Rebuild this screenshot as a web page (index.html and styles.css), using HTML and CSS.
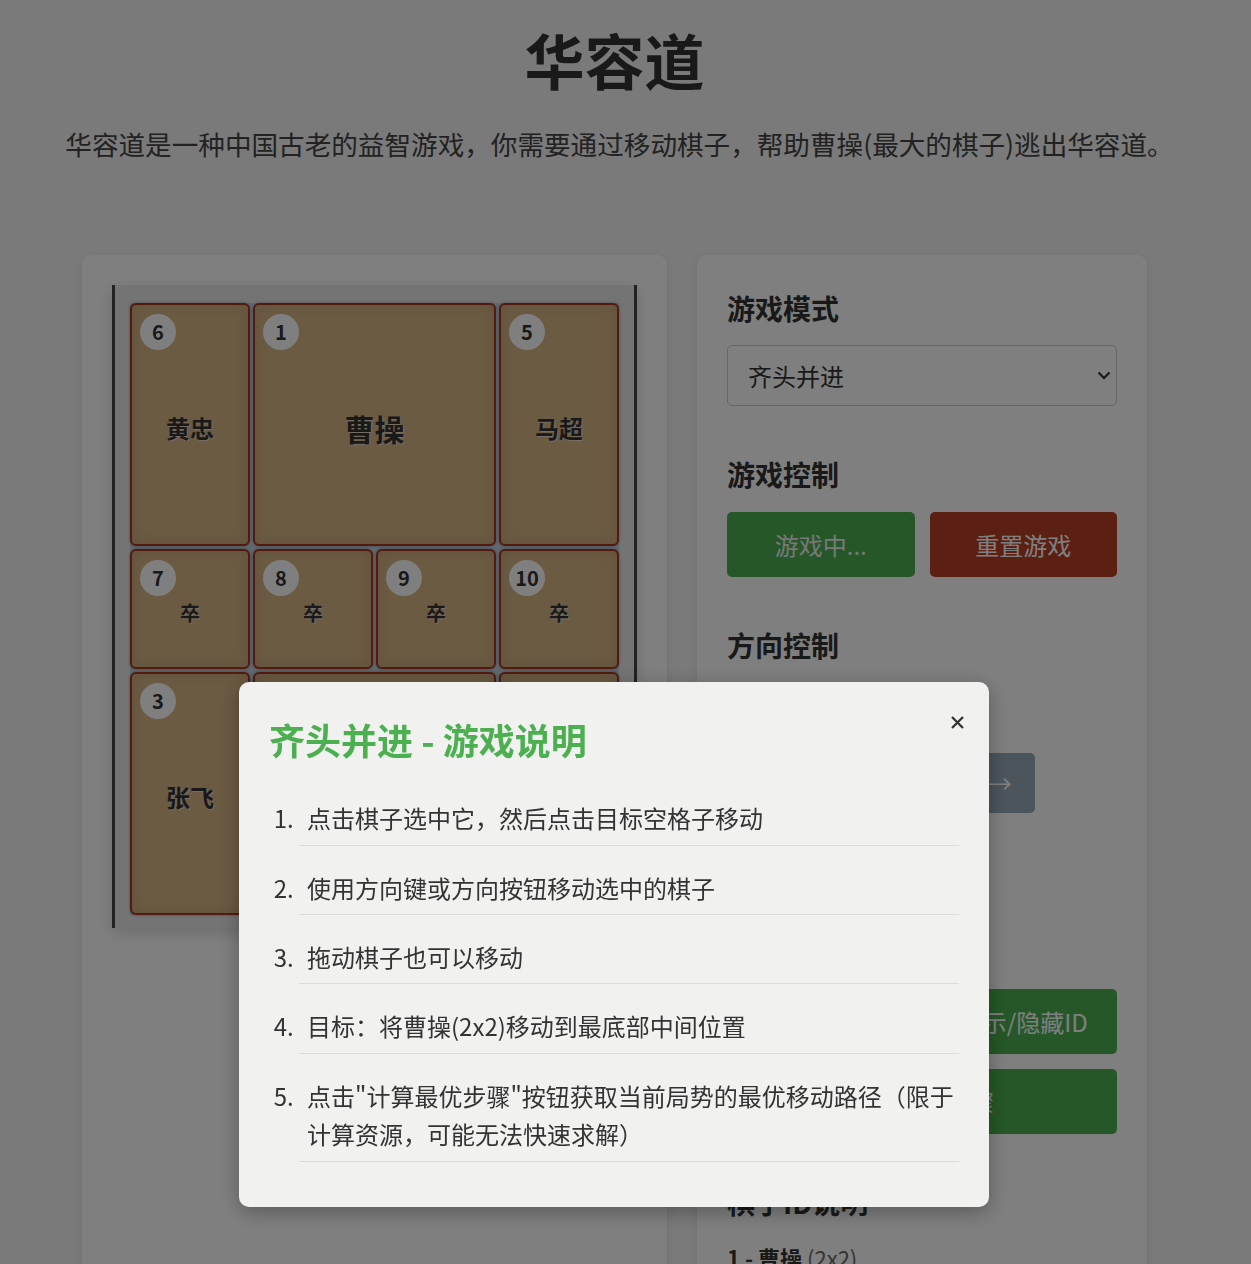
FILE: index.html
```html
<!DOCTYPE html>
<html lang="zh-CN">
<head>
<meta charset="utf-8">
<title>华容道</title>
<link rel="stylesheet" href="styles.css">
</head>
<body>
<div class="wrapper">
  <header class="header">
    <h1 class="title">华容道</h1>
    <p class="intro">华容道是一种中国古老的益智游戏，你需要通过移动棋子，帮助曹操(最大的棋子)逃出华容道。</p>
  </header>

  <main class="container">
    <section class="card game-card">
      <div class="board">
        <div class="grid">
          <div class="piece p-huang"><span class="badge">6</span><span class="label">黄忠</span></div>
          <div class="piece p-cao"><span class="badge">1</span><span class="label label-big">曹操</span></div>
          <div class="piece p-ma"><span class="badge">5</span><span class="label">马超</span></div>
          <div class="piece p-s7"><span class="badge">7</span><span class="label label-small">卒</span></div>
          <div class="piece p-s8"><span class="badge">8</span><span class="label label-small">卒</span></div>
          <div class="piece p-s9"><span class="badge">9</span><span class="label label-small">卒</span></div>
          <div class="piece p-s10"><span class="badge">10</span><span class="label label-small">卒</span></div>
          <div class="piece p-zhang"><span class="badge">3</span><span class="label">张飞</span></div>
          <div class="piece p-guan"><span class="badge">2</span><span class="label">关羽</span></div>
          <div class="piece p-zhao"><span class="badge">4</span><span class="label">赵云</span></div>
        </div>
      </div>
      <div class="exit">▼</div>
      <div class="timer">时间: 00:02</div>
      <div class="moves">移动步数: 0</div>
    </section>

    <aside class="card panel">
      <div class="section">
        <h3 class="section-title">游戏模式</h3>
        <div class="select-wrap">
          <select class="select">
            <option>齐头并进</option>
            <option>横刀立马</option>
            <option>指挥若定</option>
          </select>
          <svg class="chevron" width="14" height="9" viewBox="0 0 14 9"><path d="M1.5 1.5L7 7L12.5 1.5" stroke="#333" stroke-width="2.2" fill="none"/></svg>
        </div>
      </div>

      <div class="section">
        <h3 class="section-title">游戏控制</h3>
        <div class="btn-row">
          <button class="btn btn-green btn-muted">游戏中...</button>
          <button class="btn btn-red">重置游戏</button>
        </div>
      </div>

      <div class="section">
        <h3 class="section-title">方向控制</h3>
        <div class="dpad">
          <button class="dir dir-up">↑</button>
          <button class="dir dir-left">←</button>
          <button class="dir dir-right">→</button>
          <button class="dir dir-down">↓</button>
        </div>
      </div>

      <div class="section">
        <h3 class="section-title">游戏选项</h3>
        <div class="btn-row">
          <button class="btn btn-green">游戏说明</button>
          <button class="btn btn-green">显示/隐藏ID</button>
          <button class="btn btn-green btn-wide">计算最优步骤</button>
        </div>
      </div>

      <div class="section">
        <h3 class="section-title">棋子ID说明</h3>
        <ul class="legend">
          <li><strong>1 - 曹操</strong> <span class="size">(2x2)</span></li>
          <li><strong>2 - 关羽</strong> <span class="size">(2x1)</span></li>
          <li><strong>3 - 张飞</strong> <span class="size">(1x2)</span></li>
          <li><strong>4 - 赵云</strong> <span class="size">(1x2)</span></li>
          <li><strong>5 - 马超</strong> <span class="size">(1x2)</span></li>
          <li><strong>6 - 黄忠</strong> <span class="size">(1x2)</span></li>
          <li><strong>7-10 - 卒</strong> <span class="size">(1x1)</span></li>
        </ul>
      </div>
    </aside>
  </main>
</div>

<div class="overlay">
  <div class="modal">
    <button class="close" aria-label="关闭">
      <svg width="13" height="13" viewBox="0 0 13 13"><path d="M1 1L12 12M12 1L1 12" stroke="#333" stroke-width="2.3" fill="none"/></svg>
    </button>
    <h2 class="modal-title">齐头并进 - 游戏说明</h2>
    <ol class="steps">
      <li>点击棋子选中它，然后点击目标空格子移动</li>
      <li>使用方向键或方向按钮移动选中的棋子</li>
      <li>拖动棋子也可以移动</li>
      <li>目标：将曹操(2x2)移动到最底部中间位置</li>
      <li>点击"计算最优步骤"按钮获取当前局势的最优移动路径（限于计算资源，可能无法快速求解）</li>
    </ol>
  </div>
</div>
</body>
</html>
```

FILE: styles.css
```css
* {
  box-sizing: border-box;
}

html {
  overflow: hidden;
}

html,
body {
  margin: 0;
  padding: 0;
}

body {
  background: #f5f5f5;
  color: #333;
  font-family: "Noto Sans CJK SC", "Noto Sans", sans-serif;
  line-height: 1.6;
}

.wrapper {
  width: 1229px;
}

/* Header */
.header {
  text-align: center;
}

.title {
  margin: 23px 0 0;
  font-size: 60px;
  line-height: 1.2;
  font-weight: 700;
  color: #333;
}

.intro {
  margin: 28px 0 0;
  padding-left: 10px;
  font-size: 26.6px;
  line-height: 1.6;
  color: #444;
}

/* Layout */
.container {
  width: 1065px;
  margin: 89px auto 0;
  display: flex;
  gap: 30px;
  align-items: stretch;
}

.card {
  background: #fff;
  border-radius: 10px;
  box-shadow: 0 2px 12px rgba(0, 0, 0, 0.08);
  padding: 30px;
}

.game-card {
  width: 585px;
  flex: none;
  display: flex;
  flex-direction: column;
  align-items: center;
}

/* Board */
.board {
  width: 525px;
  background: #e8e8e8;
  border-left: 3px solid #444;
  border-right: 3px solid #444;
  padding: 18px 15px 13px;
  box-shadow: 0 5px 15px rgba(0, 0, 0, 0.15);
}

.grid {
  display: grid;
  grid-template-columns: repeat(4, 120px);
  grid-template-rows: repeat(5, 120px);
  gap: 3px;
  background: #c2d1e0;
}

.piece {
  position: relative;
  display: flex;
  align-items: center;
  justify-content: center;
  padding-top: 8px;
  background: #d8b686;
  border: 2px solid #a8341c;
  border-radius: 6px;
  box-shadow: 0 0 3px rgba(0, 0, 0, 0.35), inset 0 0 14px rgba(0, 0, 0, 0.1);
  color: #333;
  font-weight: 700;
  font-size: 24px;
  text-shadow: 1px 1px 1px rgba(255, 255, 255, 0.55);
}

.label-big {
  font-size: 30px;
}

.label-small {
  font-size: 20px;
}

.badge {
  position: absolute;
  top: 9px;
  left: 8px;
  width: 36px;
  height: 36px;
  border-radius: 50%;
  background: #fff;
  display: flex;
  align-items: center;
  justify-content: center;
  font-size: 20px;
  line-height: 1;
  font-weight: 700;
  text-shadow: none;
}

.p-huang { grid-column: 1; grid-row: 1 / span 2; }
.p-cao { grid-column: 2 / span 2; grid-row: 1 / span 2; }
.p-ma { grid-column: 4; grid-row: 1 / span 2; }
.p-s7 { grid-column: 1; grid-row: 3; }
.p-s8 { grid-column: 2; grid-row: 3; }
.p-s9 { grid-column: 3; grid-row: 3; }
.p-s10 { grid-column: 4; grid-row: 3; }
.p-zhang { grid-column: 1; grid-row: 4 / span 2; }
.p-guan { grid-column: 2 / span 2; grid-row: 4; }
.p-zhao { grid-column: 4; grid-row: 4 / span 2; }

.exit {
  margin-top: -2px;
  font-size: 14px;
  line-height: 1;
  color: #999;
}

.timer {
  margin-top: 44px;
  font-size: 24px;
  color: #333;
}

.moves {
  margin-top: 30px;
  font-size: 20px;
  color: #333;
}

/* Panel */
.panel {
  width: 450px;
  flex: none;
  padding-top: 31px;
  display: flex;
  flex-direction: column;
  gap: 46px;
}

.section-title {
  margin: 0 0 15px;
  font-size: 28px;
  line-height: 1.6;
  font-weight: 700;
  color: #333;
}

.select-wrap {
  position: relative;
}

.select {
  display: block;
  width: 100%;
  height: 61px;
  padding: 0 40px 0 20px;
  border: 1px solid #ccc;
  border-radius: 5px;
  background-color: #fff;
  color: #333;
  font-family: inherit;
  font-size: 24px;
  appearance: none;
  -webkit-appearance: none;
}

.chevron {
  position: absolute;
  right: 6px;
  top: 26px;
  pointer-events: none;
}

.btn-row {
  display: grid;
  grid-template-columns: 1fr 1fr;
  gap: 15px;
}

.btn {
  height: 65px;
  border: none;
  border-radius: 5px;
  color: #fff;
  font-family: inherit;
  font-size: 24px;
  padding: 0;
}

.btn-green {
  background: #4caf50;
}

.btn-muted {
  color: #f0f0f0;
}

.btn-red {
  background: #b64024;
}

.btn-wide {
  grid-column: 1 / -1;
}

.dpad {
  display: grid;
  grid-template-columns: repeat(3, 70px);
  grid-template-rows: repeat(3, 60px);
  gap: 10px 8px;
  justify-content: center;
}

.dir {
  border: none;
  border-radius: 5px;
  background: #98aab8;
  color: #fff;
  font-family: inherit;
  font-size: 24px;
  padding: 0;
}

.dir-up { grid-column: 2; grid-row: 1; }
.dir-left { grid-column: 1; grid-row: 2; }
.dir-right { grid-column: 3; grid-row: 2; }
.dir-down { grid-column: 2; grid-row: 3; }

.legend {
  list-style: none;
  margin: 0;
  padding: 0;
  font-size: 22px;
  line-height: 1.6;
}

.legend li {
  margin-bottom: 8px;
}

.legend .size {
  color: #666;
}

/* Modal */
.overlay {
  position: fixed;
  inset: 0;
  background: rgba(0, 0, 0, 0.5);
  display: flex;
  justify-content: center;
  align-items: flex-start;
  padding: 682px 23px 0 0;
}

.modal {
  position: relative;
  width: 750px;
  padding: 30px;
  background: #f1f1f0;
  border-radius: 10px;
  box-shadow: 0 5px 20px rgba(0, 0, 0, 0.3);
}

.close {
  position: absolute;
  top: 34px;
  right: 25px;
  width: 13px;
  height: 13px;
  padding: 0;
  border: none;
  background: none;
  display: flex;
}

.modal-title {
  margin: 6px 0 0;
  font-size: 36px;
  line-height: 1.2;
  font-weight: 700;
  color: #4caf50;
}

.steps {
  margin: 30px 0 0;
  padding: 0 0 0 30px;
  font-size: 24px;
  line-height: 1.6;
  color: #333;
}

.steps li {
  padding: 8px 0 7px 8px;
  border-bottom: 1px solid #ddd;
  margin-bottom: 15px;
}
```
